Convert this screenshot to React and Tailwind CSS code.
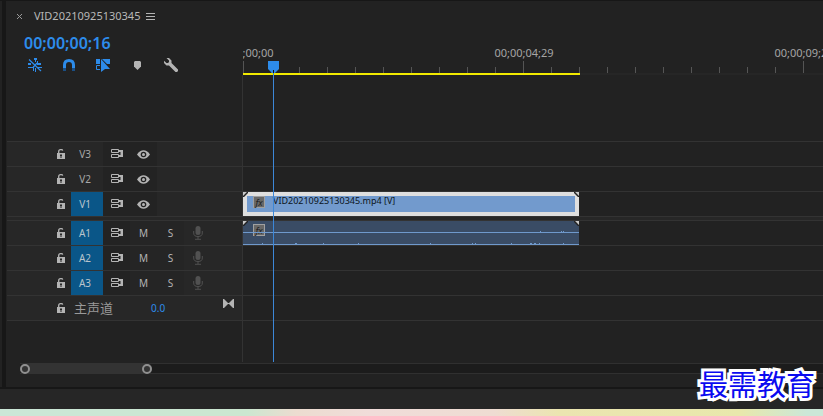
const TICKS = Array.from({ length: 21 }, (_, i) => i)
const LABELS = ['00;00;00;00', '00;00;04;29', '00;00;09;28']

const VIDEO_TRACKS = [{ id: 'V3' }, { id: 'V2' }, { id: 'V1', active: true, clip: true }]
const AUDIO_TRACKS = [{ id: 'A1', clip: true }, { id: 'A2' }, { id: 'A3' }]

function LockIcon() {
  return (
    <svg width="8" height="10" viewBox="0 0 8 10" fill="none">
      <path d="M1.700 5V2.500Q1.700.7 3.500.7H4.500Q5.500.7 5.700 1.600" stroke="#b4b4b4" strokeWidth="1.300" />
      <path d="M0 4H8V10H0Z" fill="#b4b4b4" />
      <path d="M3 5.500H5V7H4.500V9H3.500V7H3Z" fill="#262626" />
    </svg>
  )
}

function SyncIcon() {
  return (
    <svg width="12" height="10" viewBox="0 0 12 10" fill="none" stroke="#b4b4b4">
      <path d="M.5.5H7.500V3.500H.5ZM.5 5.500H7.500V8.500H.5Z" />
      <path d="M8 1H12V8H8V6H9.500V3H8Z" fill="#b4b4b4" stroke="none" />
    </svg>
  )
}

function EyeIcon() {
  return (
    <svg width="13" height="9" viewBox="0 0 13 9">
      <path d="M0 4.500Q3 .3 6.500.3T13 4.500Q10 8.700 6.500 8.700T0 4.500Z" fill="#b4b4b4" />
      <circle cx="6.500" cy="4.500" r="2.800" fill="#222" />
      <circle cx="6.500" cy="4.500" r="1.500" fill="#b4b4b4" />
    </svg>
  )
}

function MicIcon() {
  return (
    <svg width="10" height="14" viewBox="0 0 10 14" fill="none" stroke="#515151">
      <rect x="2.500" y="0" width="5" height="9" rx="2.500" fill="#515151" stroke="none" />
      <path d="M.7 5V7Q.7 10.500 5 10.500T9.300 7V5M5 10.500V13M2 13.300H8" />
    </svg>
  )
}

function NestIcon() {
  return (
    <svg width="14" height="14" viewBox="0 0 14 14" fill="#2d8ceb">
      <path d="M6 0H9V2H8V4H7V2H6ZM7 10H8V14H7Z" />
      <path d="M0 5H3V7H0ZM0 9H5V10H0ZM9 5H13V7H9ZM10 9H14V10H10ZM5 8H6V13H5ZM9 3H10V5H9Z" />
      <path d="M1 1.500L13 13M5 9.500L9 5" stroke="#2d8ceb" strokeWidth="1.200" />
    </svg>
  )
}

function MagnetIcon() {
  return (
    <svg width="12" height="12" viewBox="0 0 12 12" fill="none" strokeWidth="3">
      <path d="M1.500 9V6Q1.500 1.500 6 1.500T10.500 6V9" stroke="#2d8ceb" />
      <path d="M1.500 9V12M10.500 9V12" stroke="#1a4f85" />
    </svg>
  )
}

function LinkedIcon() {
  return (
    <svg width="14" height="13" viewBox="0 0 14 13" fill="#2d8ceb">
      <path d="M0 0H4V5H0ZM6 0H14V5H11L6 0Z" />
      <path d="M5 0L14 10H9L5 13Z" />
      <path d="M4 6.500H.5V10.500H4" fill="none" stroke="#2d8ceb" />
    </svg>
  )
}

function MarkerIcon() {
  return (
    <svg width="7" height="9" viewBox="0 0 7 9">
      <path d="M1 0H6L7 1V5.500L3.500 9L0 5.500V1Z" fill="#b4b4b4" />
    </svg>
  )
}

function WrenchIcon() {
  return (
    <svg width="14" height="14" viewBox="0 0 14 14">
      <path
        d="M2.500 0H5L7.500 2.500V5L14 11.500V13L13 14H11.500L5 7.500H2.500L0 5V2.700L2.500 5H4L5 4V2.500Z"
        fill="#b4b4b4"
      />
    </svg>
  )
}

function FxBadge() {
  return (
    <span className="flex h-3 w-3 items-center justify-center border border-[#a0a0a0] bg-[#686868] text-[9px] leading-none text-[#222] italic">
      fx
    </span>
  )
}

function Corner({ flip }) {
  return (
    <svg
      width="5"
      height="5"
      viewBox="0 0 5 5"
      className={flip ? 'absolute top-0 right-0 -scale-x-100' : 'absolute top-0 left-0'}
    >
      <path d="M0 0H5L0 5Z" fill="#c8c8c8" />
      <path d="M5 0L0 5" stroke="#222" strokeWidth="1.500" />
    </svg>
  )
}

function VideoClip() {
  return (
    <div className="relative h-6 w-[336px] border-4 border-[#dfdfdf] bg-[#729acd]">
      <div className="flex items-start gap-2 pl-1.5 text-[9px] leading-[10px] whitespace-nowrap text-[#0c1420]">
        <FxBadge />
        VID20210925130345.mp4 [V]
      </div>
      <div className="absolute -inset-1">
        <Corner />
        <Corner flip />
      </div>
    </div>
  )
}

function AudioClip() {
  return (
    <div className="relative h-6 w-[336px] bg-[#3a4c65] pt-[3px] pl-2.5">
      <FxBadge />
      <svg width="336" height="24" className="absolute top-0 left-0" stroke="#6f99cc">
        <path d="M0 11.500H336M0 23.500H336" />
        <path d="M19 22.500H20M52 22.500H54M80 22.500H81M115 22.500H116M187 22.500H188M229 22.500H230M232 22.500H233M268 22.500H269M287 22.500H289M291 22.500H293M296 22.500H297M320 22.500H321M297 10.500H298M318 10.500H319M320 10.500H321" />
      </svg>
      <Corner />
      <Corner flip />
    </div>
  )
}

function IconButton({ label, className, children }) {
  return (
    <button aria-label={label} className={`flex shrink-0 items-center ${className}`}>
      {children}
    </button>
  )
}

function Track({ track, audio }) {
  const on = audio || track.active
  return (
    <div className="flex h-[25px] border-t border-[#333]">
      <div className="flex w-[236px] shrink-0 items-stretch border-r border-[#333] bg-[#272727] pl-[46px]">
        <IconButton label={`Lock ${track.id}`} className="w-[18px] pl-1">
          <LockIcon />
        </IconButton>
        <button
          className={
            on
              ? 'w-8 bg-[#0a5688] pr-1 text-[10px] text-[#b9c4cc]'
              : 'w-8 pr-1 text-[10px] text-[#a8a8a8]'
          }
        >
          {track.id}
        </button>
        <IconButton label={`Sync lock ${track.id}`} className="w-[27px] bg-[#232323] pl-2">
          <SyncIcon />
        </IconButton>
        {audio ? (
          <>
            <button className="w-[27px] bg-[#252525] text-[10px] text-[#b4b4b4]">M</button>
            <button className="w-[27px] bg-[#252525] text-[10px] text-[#b4b4b4]">S</button>
            <IconButton label={`Record ${track.id}`} className="w-[27px] justify-center">
              <MicIcon />
            </IconButton>
          </>
        ) : (
          <IconButton label={`Show ${track.id}`} className="w-[27px] justify-center bg-[#232323]">
            <EyeIcon />
          </IconButton>
        )}
      </div>
      <div className="min-w-0 flex-1">
        {track.clip && (audio ? <AudioClip /> : <VideoClip />)}
      </div>
    </div>
  )
}

function Ruler() {
  return (
    <div className="min-w-0 flex-1 overflow-hidden pt-11">
      <div className="-ml-[139px] flex text-[11px] leading-4 text-[#a5a5a5]">
        {LABELS.map((label) => (
          <span key={label} className="w-[280px] shrink-0 text-center">
            {label}
          </span>
        ))}
      </div>
      <div className="flex h-3 items-end">
        {TICKS.map((i) => (
          <span
            key={i}
            className={
              i % 10 === 0
                ? 'h-3 w-7 shrink-0 border-l border-[#555]'
                : 'h-1.5 w-7 shrink-0 border-l border-[#555]'
            }
          />
        ))}
      </div>
      <div className="h-0.5 bg-[#262626]">
        <div className="h-0.5 w-[337px] bg-[#f2ea00]" />
      </div>
    </div>
  )
}

function Playhead() {
  return (
    <div className="pointer-events-none absolute top-[60px] bottom-0 left-[261px] flex w-[11px] flex-col items-center">
      <svg width="11" height="12" viewBox="0 0 11 12" className="shrink-0">
        <path d="M0 0H11V8L7 12H4L0 8Z" fill="#2d8ceb" />
        <path d="M5.500 9V12" stroke="#111" />
      </svg>
      <span className="w-px flex-1 bg-[#3c87d8]" />
    </div>
  )
}

export default function App() {
  return (
    <div className="relative overflow-hidden bg-[#171717] pt-px font-['Noto_Sans','Noto_Sans_CJK_SC',sans-serif]">
      <div className="flex">
        <div className="mr-1 w-0.5 shrink-0 bg-[#222]" />
        <main className="min-w-0 flex-1 bg-[#222] pb-[13px] pl-px">
          <div className="relative">
            <header className="flex">
              <div className="w-[236px] shrink-0">
                <div className="flex h-[30px] items-center pl-2 text-[11px] text-[#b8b8b8]">
                  <button aria-label="Close" className="w-[19px] text-left">
                    <svg width="7" height="7" viewBox="0 0 7 7" className="ml-px" stroke="#999">
                      <path d="M1 1L6 6M6 1L1 6" />
                    </svg>
                  </button>
                  <h1>VID20210925130345</h1>
                  <button aria-label="Panel menu" className="ml-1.5 flex w-[9px] flex-col gap-0.5">
                    <span className="h-px bg-[#b4b4b4]" />
                    <span className="h-px bg-[#b4b4b4]" />
                    <span className="h-px bg-[#b4b4b4]" />
                  </button>
                </div>
                <div className="pl-[17px] text-[16px] leading-6 font-semibold text-[#2d8ceb]">00;00;00;16</div>
                <div className="flex h-5 items-center pl-[11px]">
                  <IconButton label="Insert as nest" className="w-[34px] justify-center">
                    <NestIcon />
                  </IconButton>
                  <IconButton label="Snap" className="w-[34px] justify-center">
                    <MagnetIcon />
                  </IconButton>
                  <IconButton label="Linked selection" className="w-[34px] justify-center">
                    <LinkedIcon />
                  </IconButton>
                  <IconButton label="Add marker" className="w-[34px] justify-center">
                    <MarkerIcon />
                  </IconButton>
                  <IconButton label="Settings" className="w-[34px] justify-center">
                    <WrenchIcon />
                  </IconButton>
                </div>
              </div>
              <Ruler />
            </header>

            <div className="h-[66px] w-[236px] border-r border-[#333]" />
            <section>
              {VIDEO_TRACKS.map((track) => (
                <Track key={track.id} track={track} />
              ))}
            </section>
            <div className="h-1 border-t border-[#333] bg-[#272727]" />
            <section>
              {AUDIO_TRACKS.map((track) => (
                <Track key={track.id} track={track} audio />
              ))}
              <div className="flex h-[26px] border-y border-[#333]">
                <div className="flex w-[236px] shrink-0 items-center border-r border-[#333] bg-[#272727] pl-[46px]">
                  <IconButton label="Lock master" className="w-[18px] pl-1">
                    <LockIcon />
                  </IconButton>
                  <span className="w-20 pl-[3px] text-[13px] leading-5 text-[#999]">主声道</span>
                  <span className="text-[10px] text-[#2d8ceb]">0.0</span>
                  <button aria-label="Keyframes" className="mr-2 mb-2.5 ml-auto">
                    <svg width="11" height="9" viewBox="0 0 11 9" fill="#b4b4b4">
                      <path d="M0 0H1L5 4V5L1 9H0ZM11 0H10L6 4V5L10 9H11Z" />
                      <path d="M5 4H6V5H5Z" />
                    </svg>
                  </button>
                </div>
              </div>
            </section>
            <div className="h-[41px] w-[236px] border-r border-[#333]" />
            <Playhead />
          </div>

          <div className="mt-px flex h-[11px] items-center border-y border-[#303030] bg-[#1c1c1c]">
            <div className="h-[11px] w-[13px] shrink-0 bg-[#222]" />
            <div className="flex h-[11px] w-[132px] shrink-0 items-center justify-between rounded-full bg-[#333]">
              <span className="h-2.5 w-2.5 rounded-full border-2 border-[#909090]" />
              <span className="h-2.5 w-2.5 rounded-full border-2 border-[#909090]" />
            </div>
          </div>
        </main>
      </div>
      <footer className="mt-0.5">
        <div className="h-5 bg-[#262626]" />
        <div className="h-[7px] bg-[linear-gradient(90deg,#cbe7d7_0%,#cbe7d0_30%,#ecdcd0_36%,#f0dcd9_45%,#eedcd2_60%,#ebe5b0_68%,#e8e8ac_90%,#cbe7d7_98%)]" />
      </footer>
      <div className="absolute right-2 bottom-2 text-[29px] leading-[46px] font-normal text-[#0a0af0] [-webkit-text-stroke:6px_white] [paint-order:stroke_fill]">
        最需教育
      </div>
    </div>
  )
}
